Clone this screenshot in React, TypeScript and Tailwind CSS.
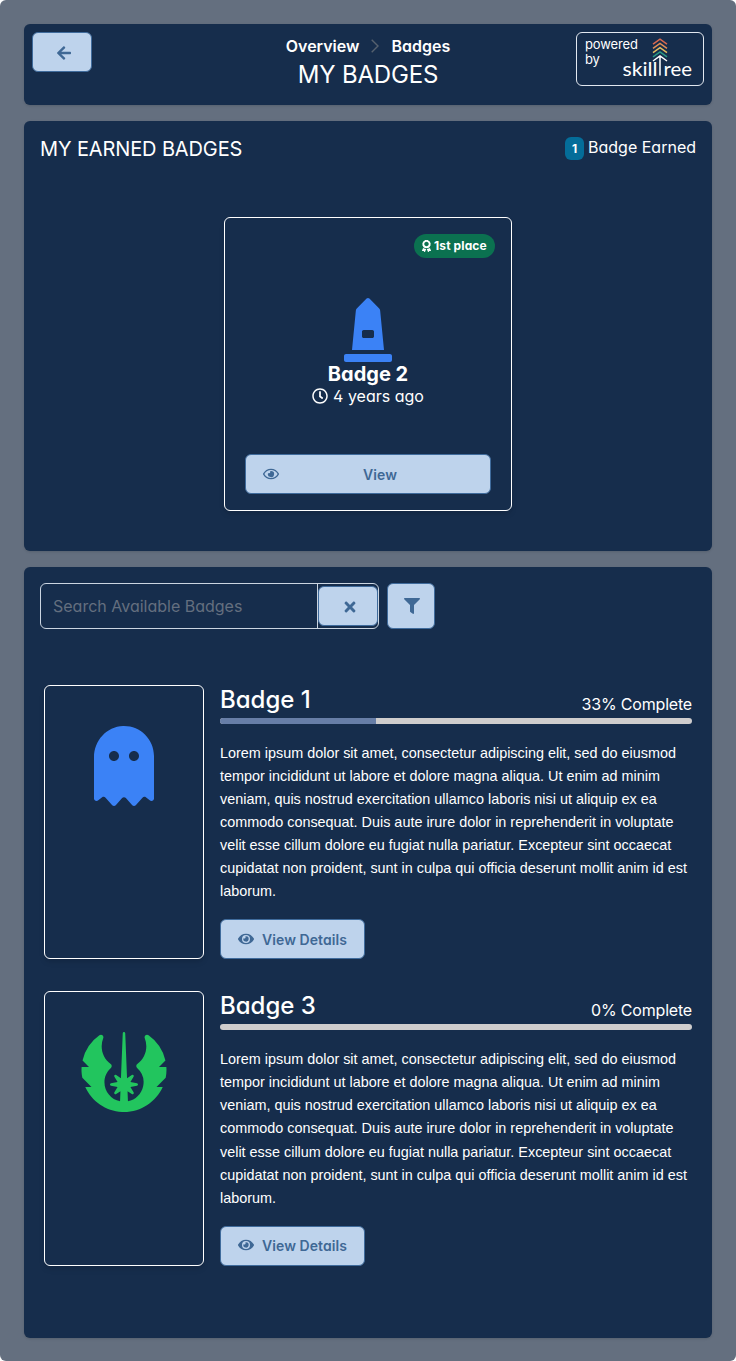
import React from "react";
import { FaArrowLeft, FaEye, FaRegEye, FaRegClock, FaAward, FaFilter, FaGhost, FaMonument, FaJedi, FaTimes } from "react-icons/fa";

const LOREM =
  "Lorem ipsum dolor sit amet, consectetur adipiscing elit, sed do eiusmod tempor incididunt ut labore et dolore magna aliqua. Ut enim ad minim veniam, quis nostrud exercitation ullamco laboris nisi ut aliquip ex ea commodo consequat. Duis aute irure dolor in reprehenderit in voluptate velit esse cillum dolore eu fugiat nulla pariatur. Excepteur sint occaecat cupidatat non proident, sunt in culpa qui officia deserunt mollit anim id est laborum.";

const button =
  "flex items-center rounded-md border border-[#3f6b9c] bg-[#bed3ec] text-sm font-semibold text-[#3f6895]";

function SkillTreeLogo() {
  return (
    <svg viewBox="0 0 70 52" className="h-[52px] w-[70px] shrink-0" fill="none">
      <g strokeWidth="1.5">
        <path d="M30 11.2 37 6.2l7 5" stroke="#d9694f" />
        <path d="M30 15.4 37 10.4l7 5" stroke="#e58e55" />
        <path d="M30 19.6 37 14.6l7 5" stroke="#e5bd60" />
        <path d="M30 23.8 37 18.8l7 5" stroke="#299985" />
        <path d="M30 28 37 23l7 5M37 23.4v19" stroke="#fff" />
      </g>
      <text x="-0.5" y="42.5" fill="#fff" className="font-[Lato,sans-serif] text-[19px]" textLength="35" lengthAdjust="spacingAndGlyphs">skill</text>
      <text x="40.5" y="42.5" fill="#fff" className="font-[Lato,sans-serif] text-[19px]" textLength="28.5" lengthAdjust="spacingAndGlyphs">ree</text>
    </svg>
  );
}

function BadgeRow({ name, percent, icon }: { name: string; percent: number; icon: React.ReactNode }) {
  return (
    <article className="flex gap-4">
      <div className="flex w-40 shrink-0 justify-center rounded-md border border-white pt-10 shadow-md">{icon}</div>
      <div className="min-w-0 flex-1">
        <div className="flex h-[33px] items-start justify-between">
          <h3 className="pt-px text-2xl leading-7 font-medium">{name}</h3>
          <span className="mt-[7px] leading-6 tracking-[-0.012em]">{percent}% Complete</span>
        </div>
        <div className="h-1.5 overflow-hidden rounded-[3px] bg-[#cfcdcd]">
          <div className="h-full bg-[#677ea7]" style={{ width: `${percent}%` }} />
        </div>
        <p className="mt-[18px] w-[474px] font-['Liberation_Sans'] text-[14.4px] leading-[23.04px]">{LOREM}</p>
        <button className={`${button} mt-4 h-10 w-[145px] pt-[0.8px] pl-[17px]`}>
          <FaEye className="mr-2 -mt-0.5 size-4" />
          <span className="tracking-[0.005em]">View Details</span>
        </button>
      </div>
    </article>
  );
}

export default function App() {
  return (
    <div className="bg-white">
      <main className="flex h-[1361px] flex-col gap-4 rounded-md bg-[#646f7f] px-6 pt-6 font-['Inter',sans-serif] text-base text-white [font-feature-settings:'cv02','cv03','cv04','cv11']">
        <header className="grid h-[81px] shrink-0 grid-cols-[128px_1fr_128px] rounded-md bg-[#162d4c] px-2 pt-2 shadow-sm">
          <button className={`${button} h-10 w-[60px] pt-px pl-[23px]`}>
            <FaArrowLeft className="size-4" />
          </button>
          <div className="text-center">
            <nav className="mt-0.5 flex items-center justify-center font-semibold leading-6">
              <span>Overview</span>
              <svg viewBox="0 0 8 14" className="mx-3 h-3.5 w-2" fill="none" stroke="#56616f" strokeWidth="1.4"><path d="m.7.7 6.3 6.3-6.3 6.3" /></svg>
              <span>Badges</span>
            </nav>
            <h1 className="pt-px text-2xl leading-8 tracking-[-0.008em]">MY BADGES</h1>
          </div>
          <div className="flex h-[54px] w-32 rounded-md border border-[#e2e8f0] pl-2 text-[13px] leading-[15px]">
            <div className="flex w-[38px] shrink-0 flex-col items-start pt-1 tracking-[-0.01em]">
              <span>powered</span>
              <span>by</span>
            </div>
            <SkillTreeLogo />
          </div>
        </header>

        <section className="h-[430px] shrink-0 rounded-md bg-[#162d4c] px-4 shadow-sm">
          <div className="flex justify-between pt-3.5">
            <h2 className="text-xl leading-7 tracking-[-0.006em]">MY EARNED BADGES</h2>
            <div className="flex h-7 items-start leading-6">
              <span className="mt-0.5 mr-1 flex h-[23px] w-[19px] items-center justify-center rounded-md bg-[#046d99] text-xs font-bold">1</span>
              Badge Earned
            </div>
          </div>
          <div className="mx-auto mt-[54px] flex h-[294px] w-72 flex-col rounded-md border border-white px-5 pt-4 shadow-md">
            <div className="-mr-1 flex h-6 w-[81px] items-center self-end rounded-xl bg-[#0b7150] pl-2 text-xs font-bold tracking-[0.01em]">
              <FaAward className="mr-[3px] h-3 w-[9px]" />
              1st place
            </div>
            <div className="mt-10 flex flex-col items-center">
              <FaMonument className="h-16 w-12 text-[#3b82f6]" />
              <h3 className="text-xl leading-6 font-bold">Badge 2</h3>
              <div className="flex items-center leading-5">
                <FaRegClock className="mr-[5px] size-4" />4 years ago
              </div>
            </div>
            <button className={`${button} mt-12 h-10 w-full px-[17px]`}>
              <FaRegEye className="-mt-px size-4" />
              <span className="flex-1 pt-px pl-2 text-center tracking-[0.01em]">View</span>
            </button>
          </div>
        </section>

        <section className="h-[771px] shrink-0 rounded-md bg-[#162d4c] px-4 pt-4 shadow-sm">
          <div className="flex gap-2">
            <div className="flex h-[46px] w-[339px] items-center rounded-md border border-[#cbd5e1]">
              <input placeholder="Search Available Badges" className="h-full w-[277px] border-r border-[#cbd5e1] px-3 placeholder:text-[#646f7f]" />
              <button className={`${button} h-10 w-[60px] pt-0.5 pl-[23px]`}>
                <FaTimes className="size-4" />
              </button>
            </div>
            <button className={`${button} h-[46px] w-12 justify-center pl-px`}>
              <FaFilter className="size-4" />
            </button>
          </div>
          <div className="mt-14 flex flex-col gap-8 px-1">
            <BadgeRow name="Badge 1" percent={33} icon={<FaGhost className="h-20 w-[60px] text-[#3b82f6]" />} />
            <BadgeRow name="Badge 3" percent={0} icon={<FaJedi className="h-20 w-[90px] text-[#22c55e]" />} />
          </div>
        </section>
      </main>
    </div>
  );
}
